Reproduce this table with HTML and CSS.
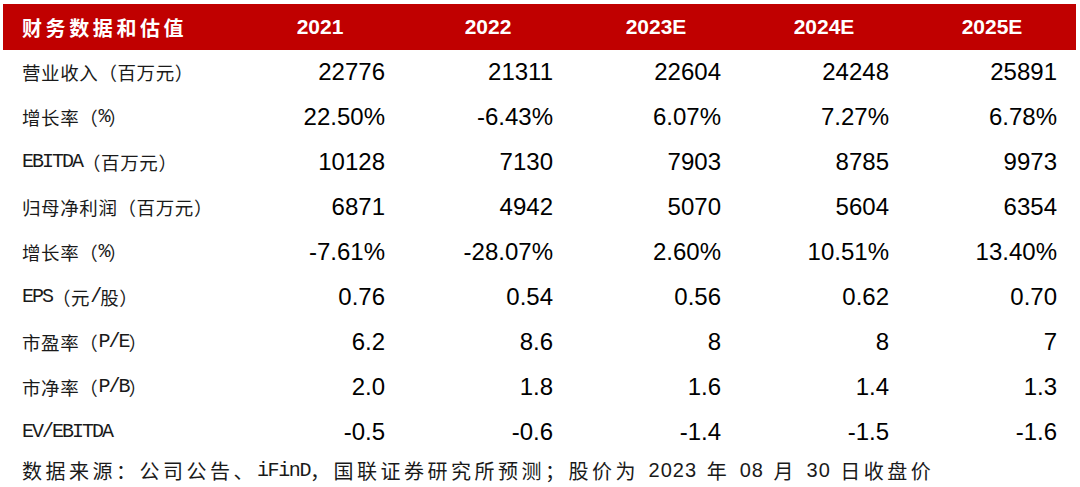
FILE: index.html
```html
<!DOCTYPE html>
<html lang="zh-CN">
<head>
<meta charset="utf-8">
<title>财务数据和估值</title>
<link rel="stylesheet" href="styles.css">
</head>
<body>
<div class="sheet">
  <div class="table">
    <div class="hcell hlabel">财务数据和估值</div>
    <div class="hcell">2021</div>
    <div class="hcell">2022</div>
    <div class="hcell">2023E</div>
    <div class="hcell">2024E</div>
    <div class="hcell">2025E</div>

    <div class="label">营业收入（百万元）</div>
    <div class="val">22776</div><div class="val">21311</div><div class="val">22604</div><div class="val">24248</div><div class="val">25891</div>

    <div class="label">增长率（<span class="lat">%</span>）</div>
    <div class="val">22.50%</div><div class="val">-6.43%</div><div class="val">6.07%</div><div class="val">7.27%</div><div class="val">6.78%</div>

    <div class="label"><span class="lat">EBITDA</span>（百万元）</div>
    <div class="val">10128</div><div class="val">7130</div><div class="val">7903</div><div class="val">8785</div><div class="val">9973</div>

    <div class="label">归母净利润（百万元）</div>
    <div class="val">6871</div><div class="val">4942</div><div class="val">5070</div><div class="val">5604</div><div class="val">6354</div>

    <div class="label">增长率（<span class="lat">%</span>）</div>
    <div class="val">-7.61%</div><div class="val">-28.07%</div><div class="val">2.60%</div><div class="val">10.51%</div><div class="val">13.40%</div>

    <div class="label"><span class="lat">EPS</span>（元<span class="lat">/</span>股）</div>
    <div class="val">0.76</div><div class="val">0.54</div><div class="val">0.56</div><div class="val">0.62</div><div class="val">0.70</div>

    <div class="label">市盈率（<span class="lat">P/E</span>）</div>
    <div class="val">6.2</div><div class="val">8.6</div><div class="val">8</div><div class="val">8</div><div class="val">7</div>

    <div class="label">市净率（<span class="lat">P/B</span>）</div>
    <div class="val">2.0</div><div class="val">1.8</div><div class="val">1.6</div><div class="val">1.4</div><div class="val">1.3</div>

    <div class="label"><span class="lat">EV/EBITDA</span></div>
    <div class="val">-0.5</div><div class="val">-0.6</div><div class="val">-1.4</div><div class="val">-1.5</div><div class="val">-1.6</div>
  </div>
  <p class="note">数据来源：公司公告、<span class="nlat">iFinD</span>，国联证券研究所预测；股价为<span class="ndig"> 2023 </span>年<span class="ndig"> 08 </span>月<span class="ndig"> 30 </span>日收盘价</p>
</div>
</body>
</html>
```

FILE: styles.css
```css
* { box-sizing: border-box; }

html, body {
  margin: 0;
  padding: 0;
  background: #ffffff;
}

.sheet {
  padding: 4px 4px 0 3px;
  width: 1080px;
  height: 487px;
  overflow: hidden;
}

.table {
  display: grid;
  grid-template-columns: 233px repeat(5, 168px);
  grid-auto-rows: 45px;
}

.hcell {
  height: 46px;
  background: #c00000;
  color: #ffffff;
  font-family: "Liberation Sans", Arial, sans-serif;
  font-weight: bold;
  font-size: 21px;
  display: flex;
  align-items: center;
  justify-content: center;
}

.hlabel {
  justify-content: flex-start;
  padding-left: 19px;
  font-family: "Noto Sans CJK SC", sans-serif;
  font-size: 20px;
  letter-spacing: 3.6px;
}

.label {
  display: flex;
  align-items: center;
  padding-left: 19px;
  font-family: "Noto Sans CJK SC", sans-serif;
  font-size: 18.5px;
  letter-spacing: 0.6px;
  color: #1a1a1a;
  white-space: nowrap;
}

.lat {
  font-family: "Liberation Mono", monospace;
  font-size: 20px;
  letter-spacing: -2px;
}

.val {
  display: flex;
  align-items: center;
  justify-content: flex-end;
  padding-right: 19px;
  font-family: "Liberation Sans", Arial, sans-serif;
  font-size: 24px;
  color: #000000;
}

.note {
  margin: 0;
  height: 32px;
  display: flex;
  align-items: center;
  padding-left: 19px;
  font-family: "Noto Sans CJK SC", sans-serif;
  font-size: 20px;
  letter-spacing: 3.5px;
  color: #1a1a1a;
  white-space: nowrap;
}

.nlat {
  font-family: "Liberation Mono", monospace;
  font-size: 20px;
  letter-spacing: -1.4px;
  white-space: pre;
}

.ndig {
  font-family: "Liberation Sans", Arial, sans-serif;
  font-size: 20px;
  letter-spacing: 1px;
  word-spacing: 3px;
  white-space: pre;
}
```
